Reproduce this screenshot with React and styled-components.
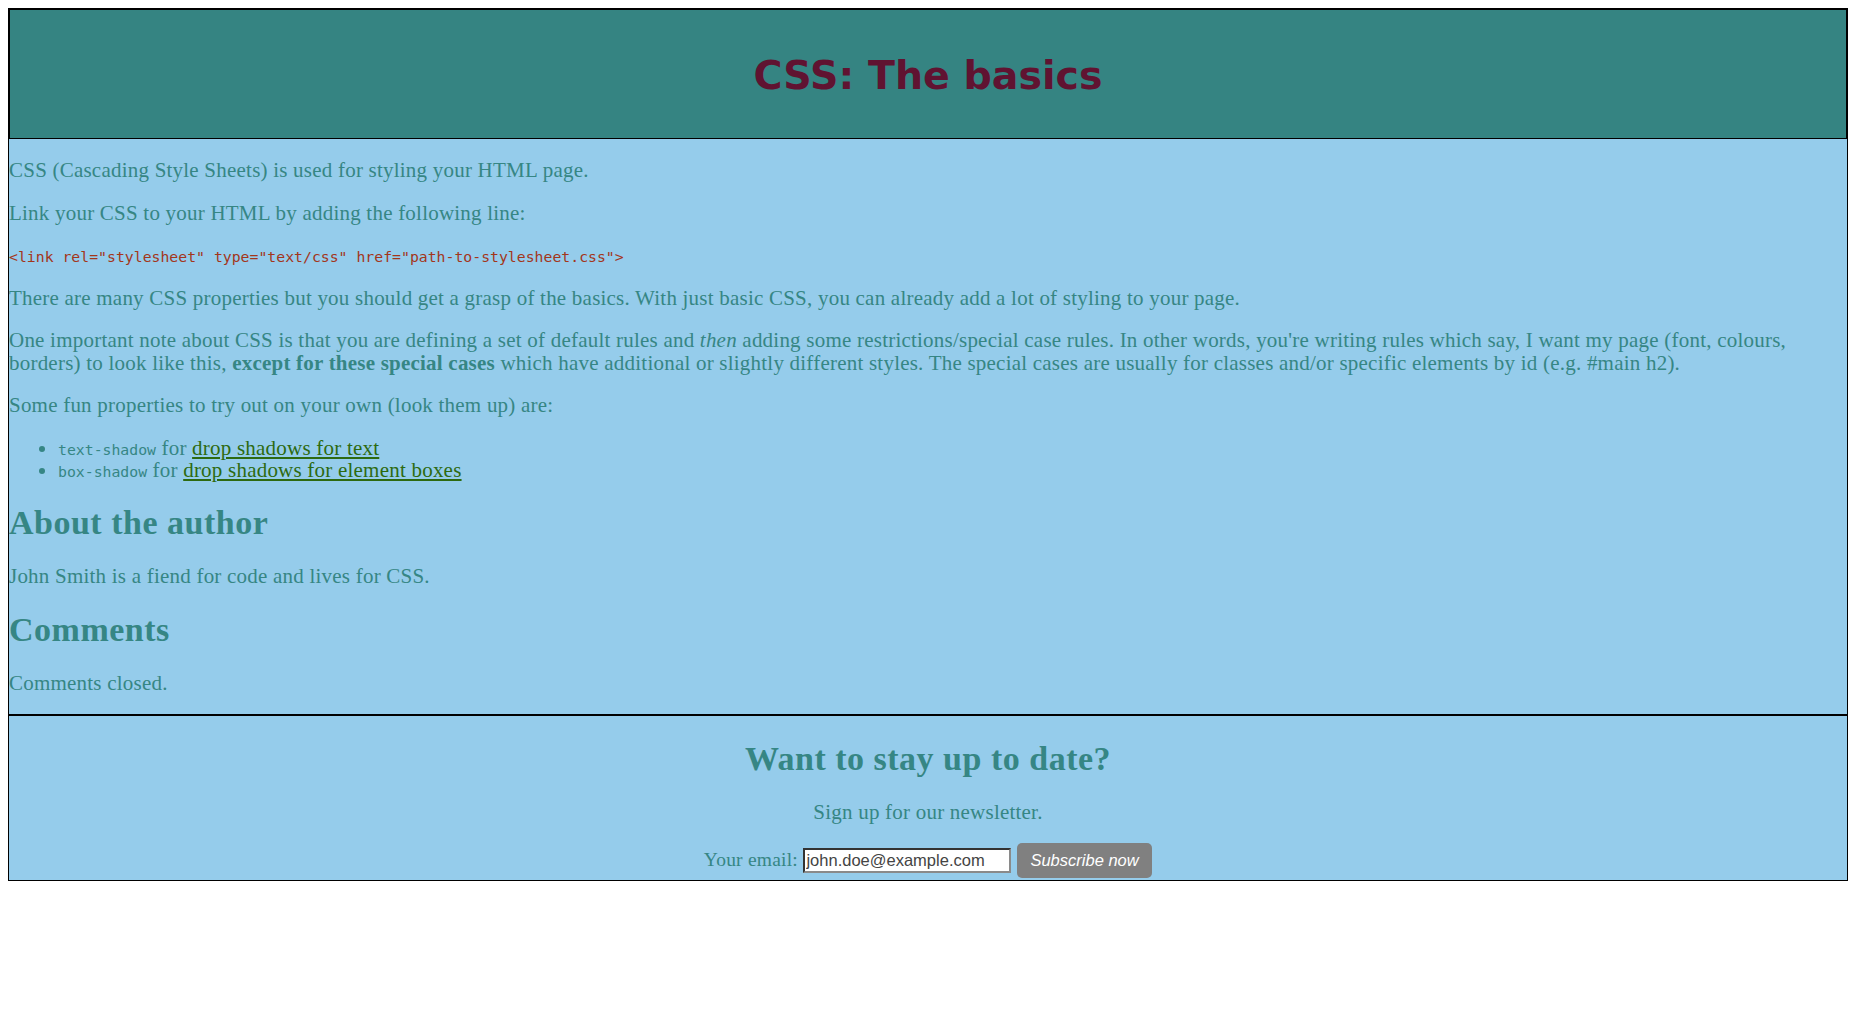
import React from 'react';
import styled, { createGlobalStyle } from 'styled-components';

const GlobalStyle = createGlobalStyle`
  body {
    margin: 8px;
    background: #ffffff;
    font-family: "Liberation Serif", "Times New Roman", serif;
  }
`;

const Page = styled.div`
  color: #368684;
  font-family: "Liberation Serif", "Times New Roman", serif;
  font-size: 21px;
  letter-spacing: 0.22px;
`;

const Header = styled.header`
  background: #358482;
  border: 2px solid #000;
  border-bottom-width: 1px;
  padding: 42px 0 40px;
  text-align: center;
`;

const Title = styled.h1`
  margin: 0;
  color: #601331;
  font-family: "DejaVu Sans", Verdana, sans-serif;
  font-size: 39.5px;
  font-weight: bold;
  letter-spacing: 0;
  line-height: 46px;
`;

const Main = styled.main`
  display: flow-root;
  background: #95cceb;
  border-left: 1px solid #000;
  border-right: 1px solid #000;
`;

const Paragraph = styled.p`
  margin: 20px 0;
  line-height: 22.5px;
  text-align: ${p => (p.$center ? 'center' : 'left')};
`;

const Code = styled.code`
  font-family: "DejaVu Sans Mono", "Liberation Mono", monospace;
  font-size: 14.8px;
  line-height: 1;
  letter-spacing: 0;
  color: ${p => (p.$plain ? 'inherit' : '#a3361b')};
`;

const List = styled.ul`
  margin: 18px 0 20px;
  padding-left: 49px;
  line-height: 22.5px;
`;

const Link = styled.a`
  color: #2d6a10;
  text-decoration: underline;
`;

const Heading = styled.h2`
  margin: 24.9px 0;
  font-size: 34px;
  font-weight: bold;
  letter-spacing: 0.5px;
  line-height: 34px;
  text-align: ${p => (p.$center ? 'center' : 'left')};
`;

const Footer = styled.footer`
  display: flow-root;
  background: #95cceb;
  border: 1px solid #000;
  border-top-width: 2px;
  padding: 1px 0 2px;
  text-align: center;
`;

const Form = styled.form`
  margin: 0;
  line-height: 22.5px;
`;

const Label = styled.label`
  color: #368684;
  font-size: 19.5px;
`;

const EmailInput = styled.input`
  box-sizing: border-box;
  width: 208px;
  height: 25px;
  padding: 0 1px;
  font-family: "Liberation Sans", Arial, sans-serif;
  font-size: 16.5px;
  letter-spacing: 0;
  color: #333;
  background: #fff;
  border-style: solid;
  border-width: 2px;
  border-color: #333 #8a8a8a #8a8a8a #333;
  vertical-align: baseline;

  &::placeholder {
    color: #444;
    opacity: 1;
  }
`;

const SubscribeButton = styled.button`
  padding: 8px 13.5px;
  font-family: "Liberation Sans", Arial, sans-serif;
  font-size: 16.5px;
  font-style: italic;
  letter-spacing: 0;
  color: #fff;
  background: #808080;
  border: none;
  border-radius: 5px;
  cursor: pointer;
`;

export default function App() {
  return (
    <>
      <GlobalStyle />
      <Page>
        <Header>
          <Title>CSS: The basics</Title>
        </Header>

        <Main>
          <Paragraph>CSS (Cascading Style Sheets) is used for styling your HTML page.</Paragraph>
          <Paragraph>Link your CSS to your HTML by adding the following line:</Paragraph>
          <Paragraph>
            <Code>{'<link rel="stylesheet" type="text/css" href="path-to-stylesheet.css">'}</Code>
          </Paragraph>
          <Paragraph>
            There are many CSS properties but you should get a grasp of the basics. With just basic CSS, you can
            already add a lot of styling to your page.
          </Paragraph>
          <Paragraph>
            One important note about CSS is that you are defining a set of default rules and <em>then</em> adding
            some restrictions/special case rules. In other words, you're writing rules which say, I want my page
            (font, colours, borders) to look like this, <strong>except for these special cases</strong> which have
            additional or slightly different styles. The special cases are usually for classes and/or specific
            elements by id (e.g. #main h2).
          </Paragraph>
          <Paragraph>Some fun properties to try out on your own (look them up) are:</Paragraph>
          <List>
            <li>
              <Code $plain>text-shadow</Code> for <Link href="#">drop shadows for text</Link>
            </li>
            <li>
              <Code $plain>box-shadow</Code> for <Link href="#">drop shadows for element boxes</Link>
            </li>
          </List>

          <Heading>About the author</Heading>
          <Paragraph>John Smith is a fiend for code and lives for CSS.</Paragraph>

          <Heading>Comments</Heading>
          <Paragraph>Comments closed.</Paragraph>
        </Main>

        <Footer>
          <Heading $center>Want to stay up to date?</Heading>
          <Paragraph $center>Sign up for our newsletter.</Paragraph>
          <Form onSubmit={e => e.preventDefault()}>
            <Label htmlFor="email">Your email:</Label>{' '}
            <EmailInput id="email" type="email" placeholder="john.doe@example.com" />{' '}
            <SubscribeButton type="submit">Subscribe now</SubscribeButton>
          </Form>
        </Footer>
      </Page>
    </>
  );
}
